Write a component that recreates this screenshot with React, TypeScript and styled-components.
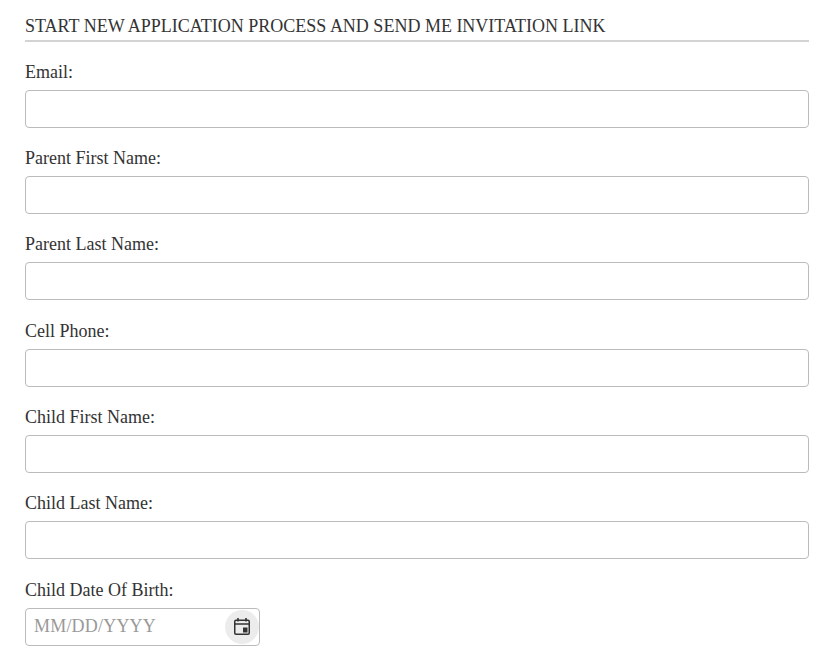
import React from "react";
import styled, { createGlobalStyle } from "styled-components";

const GlobalStyle = createGlobalStyle`
	html,
	body {
		margin: 0;
		padding: 0;
		background: #fff;
		overflow: hidden;
	}
	body {
		font-family: "Liberation Serif", "Times New Roman", serif;
		color: #333;
	}
`;

const Page = styled.div`
	padding: 14px 16px 0 25px;
	height: 659px;
	box-sizing: border-box;
`;

const Heading = styled.h4`
	margin: 0 0 16.6px;
	padding-bottom: 2px;
	border-bottom: 2px solid #d3d3d3;
	font-size: 18px;
	font-weight: 400;
	line-height: 24px;
	color: #333;
`;

const Form = styled.form`
	display: flex;
	flex-direction: column;
	gap: 17.33px;
`;

const Field = styled.div`
	display: flex;
	flex-direction: column;
`;

const Label = styled.label`
	font-size: 18px;
	line-height: 26px;
	margin-bottom: 5px;
	color: #333;
`;

const TextInput = styled.input`
	box-sizing: border-box;
	height: 38px;
	width: 100%;
	padding: 6px 9px;
	border: 1px solid #bbb;
	border-radius: 4px;
	background: #fff;
	font-family: inherit;
	font-size: 18px;
	outline: none;
`;

const DateBox = styled.div`
	box-sizing: border-box;
	display: flex;
	align-items: center;
	justify-content: space-between;
	width: 235px;
	height: 38px;
	padding: 0 0 0 8px;
	border: 1px solid #bbb;
	border-radius: 4px;
	background: #fff;
`;

const DateInput = styled.input`
	flex: 1;
	min-width: 0;
	border: 0;
	padding: 0;
	font-family: inherit;
	font-size: 18px;
	outline: none;
	&::placeholder {
		color: #999;
		opacity: 1;
		letter-spacing: 0.2px;
	}
`;

const CalendarButton = styled.button`
	display: flex;
	align-items: center;
	justify-content: center;
	flex: none;
	width: 34px;
	height: 34px;
	padding: 0;
	border: 0;
	border-radius: 50%;
	background: #ececec;
`;

const fields = [
	"Email:",
	"Parent First Name:",
	"Parent Last Name:",
	"Cell Phone:",
	"Child First Name:",
	"Child Last Name:",
];

function CalendarIcon() {
	return (
		<svg width="16" height="17" viewBox="0 0 16 17" fill="none">
			<rect x="0.75" y="2.25" width="14.5" height="14" rx="1.2" stroke="#333" strokeWidth="1.5" />
			<path d="M0.75 6h14.5" stroke="#333" strokeWidth="1.5" />
			<path d="M4 0v3.5M12 0v3.5" stroke="#333" strokeWidth="1.6" />
			<rect x="9" y="9.5" width="4.5" height="5" fill="#333" />
		</svg>
	);
}

export default function App() {
	return (
		<Page>
			<GlobalStyle />
			<Heading>START NEW APPLICATION PROCESS AND SEND ME INVITATION LINK</Heading>
			<Form>
				{fields.map((name) => (
					<Field key={name}>
						<Label>{name}</Label>
						<TextInput type="text" />
					</Field>
				))}
				<Field>
					<Label>Child Date Of Birth:</Label>
					<DateBox>
						<DateInput type="text" placeholder="MM/DD/YYYY" />
						<CalendarButton type="button">
							<CalendarIcon />
						</CalendarButton>
					</DateBox>
				</Field>
			</Form>
		</Page>
	);
}
